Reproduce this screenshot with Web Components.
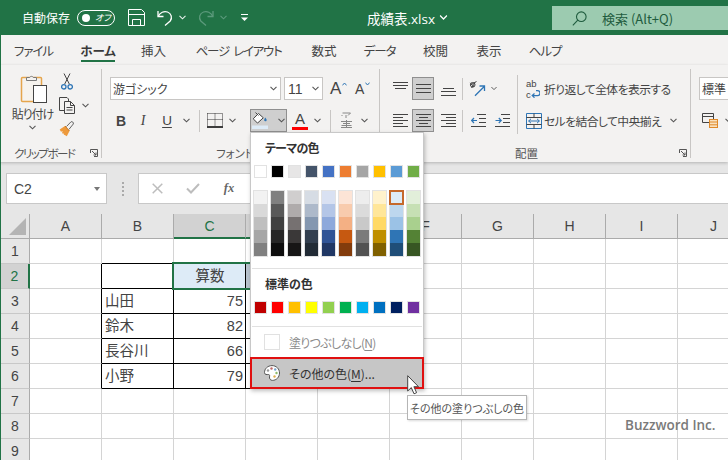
<!DOCTYPE html>
<html lang="ja">
<head>
<meta charset="utf-8">
<title>成績表.xlsx</title>
<style>
html,body{margin:0;padding:0;background:#fff;overflow:hidden}
</style>
</head>
<body>
<xl-app>
  <xl-titlebar></xl-titlebar>
  <xl-tabs></xl-tabs>
  <xl-ribbon></xl-ribbon>
  <xl-formula></xl-formula>
  <xl-sheet></xl-sheet>
  <xl-mark slot="overlay">Buzzword Inc.</xl-mark>
  <xl-color-menu slot="overlay"></xl-color-menu>
  <xl-tip slot="overlay">その他の塗りつぶしの色</xl-tip>
  <xl-cursor slot="overlay"></xl-cursor>
</xl-app>

<script>
const GREEN = '#217346';
const chev = (c='#555') => `<svg width="7" height="5" viewBox="0 0 7 5"><path d="M.5 .8 3.5 3.8 6.5 .8" fill="none" stroke="${c}" stroke-width="1.1"/></svg>`;
const lines = (a) => `<svg width="15" height="15" viewBox="0 0 15 15">${a.map(l=>`<path d="M${l[0]} ${l[2]}.5H${l[1]}" stroke="#444" stroke-width="1"/>`).join('')}</svg>`;

const ICON = {
  save:`<svg width="17" height="17" viewBox="0 0 17 17" fill="none" stroke="#fff" stroke-width="1"><path d="M.5.5h13l3 3v13H.5z"/><path d="M.5 5.500h16M4.500 16.500v-6h8v6"/></svg>`,
  undo:`<svg width="16" height="17" viewBox="0 0 16 17" fill="none" stroke="#fff" stroke-width="1.3"><path d="M1 2v5.500h5.500"/><path d="M1.300 7.200C3 3.500 7 1.700 10.500 3c4 1.500 5 6 2.700 9L8 16.500"/></svg>`,
  redo:`<svg width="16" height="17" viewBox="0 0 16 17" fill="none" stroke="#5c9a7c" stroke-width="1.3"><path d="M15 2v5.500H9.500"/><path d="M14.700 7.200C13 3.500 9 1.700 5.500 3c-4 1.500-5 6-2.700 9L8 16.500"/></svg>`,
  qat:`<svg width="7" height="8" viewBox="0 0 7 8"><path d="M0 .5h7" stroke="#fff"/><path d="M0 3.500h7L3.500 7z" fill="#fff"/></svg>`,
  search:`<svg width="15" height="15" viewBox="0 0 15 15" fill="none" stroke="#1f5c3e" stroke-width="1.100"><circle cx="9.300" cy="5.700" r="4.800"/><path d="M5.800 9.200.8 14.300"/></svg>`,
  paste:`<svg width="30" height="32" viewBox="0 0 30 32"><rect x="2.500" y="5.500" width="20" height="24" rx="1" fill="#f6f3ee" stroke="#e5a54c" stroke-width="1.500"/><path d="M7.500 8.500v-3h3.200a2 2 0 0 1 3.600 0h3.200v3z" fill="#f3f2f1" stroke="#7a7a7a"/><rect x="14.500" y="13.500" width="13" height="17" fill="#fff" stroke="#444"/></svg>`,
  cut:`<svg width="12" height="17" viewBox="0 0 12 17" fill="none"><path d="M3 .5 8.300 11M9 .5 3.700 11" stroke="#444"/><circle cx="2.800" cy="13.800" r="2.200" stroke="#2e75b5" stroke-width="1.300"/><circle cx="9.200" cy="13.800" r="2.200" stroke="#2e75b5" stroke-width="1.300"/></svg>`,
  copy:`<svg width="17" height="17" viewBox="0 0 17 17" fill="none" stroke="#444"><path d="M5 13.500H.5V.5h7.500l1.500 1.500V4"/><path d="M5.500 4.500h6l4 4v8h-10z" fill="#f3f2f1"/><path d="M11.500 4.500v4h4M7.500 10.500h6M7.500 13h6"/></svg>`,
  brush:`<svg width="16" height="16" viewBox="0 0 16 16"><path d="M.7 8.500 6 5l4.500 5-2.700 5.300-2-1.300-1-.300.300-1.500-1.200.700-.8-1.500.600-1.400L2 10.800z" fill="#ed9a3c"/><path d="M6 5l4.500 5" stroke="#c8741e"/><path d="M7.500 5.500 12 .8c1-.8 3 .8 2.300 2.200L10 8.300" fill="#f3f2f1" stroke="#666"/></svg>`,
  launcher:`<svg width="8" height="8" viewBox="0 0 8 8" fill="none" stroke="#555"><path d="M.5 4V.5H7.500V7.500H4"/><path d="M2 2 6 6M6 3.500V6H3.500"/></svg>`,
  border:`<svg width="16" height="15" viewBox="0 0 16 15" fill="none"><path d="M.5 .5H15.500V13M.5 .5V13M8 .5V13M.5 6.500H15.500" stroke="#333" stroke-dasharray="1 1"/><path d="M0 14h16" stroke="#000" stroke-width="1.500"/></svg>`,
  bucket:`<svg width="16" height="17" viewBox="0 0 16 17"><path d="M6.500 1.500 1.200 6.800l4.300 4.300 5.800-5.300z" fill="#fff" stroke="#444" stroke-width="1"/><path d="M3.500 .5 6.500 3.500" stroke="#444"/><path d="M13.300 5.500c1 1.500 1.700 2.300 1.200 3.200s-2 .7-2.300-.2c-.2-.7.500-2 1.100-3z" fill="#2e75b5"/><path d="M0 13.500h16V17H0z" fill="#ddebf7"/></svg>`,
  phon:`<svg width="13" height="17" viewBox="0 0 13 17" fill="none" stroke="#888"><path d="M2.500 1h8L8 3.500M6 3v3M2 4v-1"/><path d="M1 9.500h11M3 11.500h7M1.500 13.500h10M1 15.500h11M6.500 8v8"/></svg>`,
  orient:`<svg width="17" height="17" viewBox="0 0 17 17" fill="none"><path d="M1 5.200 7.500 1.500M2.500 8 6 2.800M1.300 2.800l3.800 4.200" stroke="#444"/><circle cx="3.700" cy="4.800" r="2.300" stroke="#444"/><path d="M6 15.800 15 6.800M10.500 6h5v5" stroke="#2e75b5" stroke-width="1.300"/></svg>`,
  indentL:`<svg width="15" height="13" viewBox="0 0 15 13" fill="none"><path d="M6 .5h9M8 4.500h7M8 8.500h7M0 12.500h15" stroke="#444"/><path d="M6 6.500H.8M3 4 .7 6.500 3 9" stroke="#2e75b5" stroke-width="1.200"/></svg>`,
  indentR:`<svg width="15" height="13" viewBox="0 0 15 13" fill="none"><path d="M6 .5h9M8 4.500h7M8 8.500h7M0 12.500h15" stroke="#444"/><path d="M.5 6.500h5.500M3.800 4 6.200 6.500 3.800 9" stroke="#2e75b5" stroke-width="1.200"/></svg>`,
  merge:`<svg width="16" height="16" viewBox="0 0 16 16" fill="none"><path d="M.5 .5h15v15H.5z" stroke="#2e75b5"/><path d="M.5 4.500h15M.5 11.500h15M8 .5v4M8 11.500v4" stroke="#444"/><path d="M2.500 8h11M5 5.800 2.700 8 5 10.200M11 5.800 13.300 8 11 10.200" stroke="#2e75b5"/></svg>`,
  style:`<svg width="16" height="15" viewBox="0 0 16 15" fill="none"><path d="M.5 .5h11v9H.5z" stroke="#444"/><path d="M.5 3.500h11" stroke="#444"/><rect x="7.500" y="6.500" width="8" height="8" fill="#f9e2c0" stroke="#e08a2a"/><path d="M7.500 9h8M7.500 11.800h8" stroke="#e08a2a"/></svg>`,
  x:`<svg width="11" height="11" viewBox="0 0 11 11"><path d="M.7.7 10.300 10.300M10.300.7.700 10.300" stroke="#bdbdbd" stroke-width="1.500"/></svg>`,
  check:`<svg width="14" height="11" viewBox="0 0 14 11"><path d="M1 5.500 5 9.500 13 1" fill="none" stroke="#bdbdbd" stroke-width="2"/></svg>`,
  palette:`<svg width="16" height="16" viewBox="0 0 16 16"><path d="M8 .6C3.600.6.500 3.800.500 7.500c0 2.500 2.500 2 4 2 1.200 0 1.300 1.200 1 2.400-.3 1.500.7 3.500 2.800 3.500 4.200 0 7.200-3.300 7.200-7.400S12.400.6 8 .6z" fill="#fff" stroke="#555"/><circle cx="4" cy="5.500" r="1.200" fill="#9a9a9a"/><circle cx="7.500" cy="3.500" r="1.200" fill="#c06a6a"/><circle cx="11.200" cy="4.500" r="1.200" fill="#7aa7d0"/><circle cx="12.500" cy="8" r="1.200" fill="#8dbb6c"/><circle cx="10.500" cy="11.500" r="1.200" fill="#e0b050"/></svg>`,
  caretUp:`<svg width="5" height="4" viewBox="0 0 5 4"><path d="M.4 3.400 2.500 1 4.600 3.400" fill="none" stroke="#2e75b5"/></svg>`,
  caretDown:`<svg width="5" height="4" viewBox="0 0 5 4"><path d="M.4 .6 2.500 3 4.600 .6" fill="none" stroke="#2e75b5"/></svg>`,
  wrapArrow:`<svg width="9" height="8" viewBox="0 0 9 8" fill="none" stroke="#2e75b5" stroke-width="1.200"><path d="M5 .6h1.500a2.500 2.500 0 0 1 0 5H1.500M3.500 3.500 1.200 5.600 3.500 7.700"/></svg>`
};
const ALIGN = {
  top: lines([[0,15,1],[0,15,4],[2,13,7]]),
  mid: lines([[0,15,3],[0,15,7],[0,15,11]]),
  bot: lines([[2,13,7],[0,15,10],[0,15,14]]),
  left: lines([[0,15,1],[0,10,4],[0,15,7],[0,10,10],[0,15,13]]),
  center: lines([[0,15,1],[3,12,4],[0,15,7],[3,12,10],[0,15,13]]),
  right: lines([[0,15,1],[5,15,4],[0,15,7],[5,15,10],[0,15,13]])
};

class XlApp extends HTMLElement{
  constructor(){
    super();
    this.attachShadow({mode:'open'}).innerHTML = `
    <style>
      :host{display:block;position:relative;width:728px;height:460px;overflow:hidden;
        font-family:"Noto Sans CJK JP","Noto Sans",sans-serif;font-feature-settings:"palt";color:#444;background:#fff}
      .main{display:flex;flex-direction:column;height:460px;box-sizing:border-box}
    </style>
    <div class="main"><slot></slot></div>
    <slot name="overlay"></slot>`;
  }
}

class XlTitlebar extends HTMLElement{
  constructor(){
    super();
    this.attachShadow({mode:'open'}).innerHTML = `
    <style>
      :host{display:flex;align-items:center;height:35px;background:${GREEN};color:#fff;font-size:12px;flex:none}
      .auto{margin-left:22px;width:48px;white-space:nowrap}
      .toggle{margin-left:7px;width:38px;height:16px;box-sizing:border-box;border:1.2px solid #fff;border-radius:8px;display:flex;align-items:center;padding-left:4px}
      .dot{width:8px;height:8px;border-radius:50%;background:#fff}
      .off{font-size:9px;margin-left:5px;line-height:12px;font-style:italic}
      .i{display:flex}
      .file{margin-left:119px;width:70px;font-size:13.500px;white-space:nowrap;font-family:"Open Sans","Noto Sans CJK JP",sans-serif}
      .search{margin-left:auto;width:176px;height:24px;margin-top:1px;background:#9ccbb0;color:#1f5c3e;display:flex;align-items:center;font-size:13px;white-space:nowrap}
    </style>
    <span class="auto">自動保存</span>
    <span class="toggle"><span class="dot"></span><span class="off">オフ</span></span>
    <span class="i" style="margin-left:13px">${ICON.save}</span>
    <span class="i" style="margin-left:12px">${ICON.undo}</span>
    <span class="i" style="margin-left:6px">${chev('#e8f1ec')}</span>
    <span class="i" style="margin-left:12px">${ICON.redo}</span>
    <span class="i" style="margin-left:6px">${chev('#5c9a7c')}</span>
    <span class="i" style="margin-left:14px">${ICON.qat}</span>
    <span class="file">成績表.xlsx</span>
    <span class="i" style="margin-left:3px;transform:scale(1.150)">${chev('#fff')}</span>
    <span class="search"><span class="i" style="margin-left:20px">${ICON.search}</span><span style="margin-left:15px">検索 (Alt+Q)</span></span>`;
  }
}

class XlTabs extends HTMLElement{
  constructor(){
    super();
    const tabs = [['ファイル',15,37,1],['ホーム',81,34],['挿入',141,25],['ページ レイアウト',196,85,2],['数式',311,26],['データ',364,31,1],['校閲',423,25],['表示',476,26],['ヘルプ',529,32,1]];
    let x = 1;
    let html = '';
    for(const [t,l,w,kana] of tabs){
      html += `<span class="tab${t=='ホーム'?' on':''}${kana==1?' kana':''}${kana==2?' kana2':''}" style="margin-left:${l-x}px;width:${w}px">${t}</span>`;
      x = l+w;
    }
    this.attachShadow({mode:'open'}).innerHTML = `
    <style>
      :host{display:flex;height:30px;background:#f3f2f1;border-left:1px solid ${GREEN};flex:none;font-size:12.500px;color:#444}
      .tab{display:flex;justify-content:center;box-sizing:border-box;height:27px;padding-top:7px;line-height:18px;white-space:pre}
      .kana{letter-spacing:-1px}
      .kana2{letter-spacing:-1.300px;word-spacing:3px}
      .on{font-weight:700;color:#3a3a3a;border-bottom:2px solid ${GREEN}}
    </style>${html}`;
  }
}

class XlGroup extends HTMLElement{
  constructor(){
    super();
    const w = this.getAttribute('w'), lx = this.getAttribute('lx');
    this.attachShadow({mode:'open'}).innerHTML = `
    <style>
      :host{display:block;flex:none;width:${w}px;height:89px;box-sizing:border-box;border-right:1px solid #c8c6c4}
      .body{height:76px}
      .foot{display:flex;align-items:center;height:16px;font-size:11.500px;color:#555;line-height:16px}
      .label{margin-left:${lx}px;white-space:nowrap;letter-spacing:${this.getAttribute('ls')||0}px}
      .launch{margin-left:auto;margin-right:${this.getAttribute('lr')||3}px;display:flex}
    </style>
    <div class="body"><slot></slot></div>
    <div class="foot"><span class="label">${this.getAttribute('label')||''}</span>
    ${this.hasAttribute('launch')?`<span class="launch">${ICON.launcher}</span>`:''}</div>`;
  }
}

class XlRibbon extends HTMLElement{
  constructor(){
    super();
    const c = (w,inner='',cls='') => `<span class="c ${cls}" style="width:${w}px">${inner}</span>`;
    const sep = `<span class="sep"></span>`;
    this.attachShadow({mode:'open'}).innerHTML = `
    <style>
      :host{display:flex;flex:none;height:97px;box-sizing:border-box;padding-top:4px;background:#f3f2f1;border-left:1px solid ${GREEN};
        box-shadow:0 1px 3px rgba(0,0,0,.22);position:relative;z-index:1;font-size:12px}
      .rows{display:flex;flex-direction:column;gap:9px;padding-top:8px}
      .row{display:flex;height:23px;align-items:center}
      .c{display:flex;align-items:center;justify-content:center;height:23px;flex:none}
      .sep{flex:none;width:1px;height:22px;background:#c8c6c4}
      .on{background:#cfcfcf;box-shadow:inset 0 0 0 1px #8f8f8f}
      .box{box-sizing:border-box;height:23px;background:#fff;border:1px solid #c8c6c4;display:flex;align-items:center;justify-content:space-between;flex:none;white-space:nowrap}
      .clip{display:flex;height:76px}
      .paste{width:57px;display:flex;flex-direction:column;align-items:center;padding:3px 0 0 6px;box-sizing:border-box}
      .paste svg{display:block}
      .paste .ic{margin-left:3px}
      .paste .t{line-height:16px;margin-top:2px;white-space:nowrap;font-size:12px;letter-spacing:-1px}
      .paste .d{margin-top:3px;display:flex}
      .tools{display:flex;flex-direction:column;padding-top:0}
      .tools .row{height:24px}
      .b{font:700 14px "Liberation Sans",sans-serif;color:#444}
      .i{font:italic 14px "Liberation Serif",serif;color:#444}
      .u{font:13.500px "Liberation Sans",sans-serif;color:#444;text-decoration:underline;text-underline-offset:2px}
      .aa{font:17px "Liberation Sans",sans-serif;color:#444;width:12px}
      .a2{font:14px "Liberation Sans",sans-serif;color:#444;width:10px}
      .fc{flex-direction:column;font:15px/14px "Liberation Sans",sans-serif;color:#444}
      .fc i{display:block;width:16px;height:3px;background:#f00;margin-top:1px}
      .wrapi{display:flex;flex-direction:column;font:9.500px/11px "Liberation Sans",sans-serif;color:#444;white-space:nowrap;width:15px}
      .wrapi span{display:flex;align-items:center}
      .split{display:flex;height:76px}
      .left{width:137px;box-sizing:border-box;padding-left:9px;flex:none}
      .vline{flex:none;width:1px;height:59px;margin-top:6px;background:#c8c6c4}
      .txt{margin-left:1px;white-space:nowrap;font-size:11.800px;letter-spacing:-.55px}
      .cr{display:flex;align-self:flex-start;margin-top:5px}
    </style>

    <xl-group w="101" lx="13" ls="-1.500" label="クリップボード" launch>
      <div class="clip">
        <div class="paste"><span class="ic">${ICON.paste}</span><span class="t">貼り付け</span><span class="d">${chev()}</span></div>
        <div class="tools">
          <div class="row">${c(18,ICON.cut)}</div>
          <div class="row">${c(18,ICON.copy)}${c(6)}${c(7,chev())}</div>
          <div class="row">${c(18,ICON.brush)}</div>
        </div>
      </div>
    </xl-group>

    <xl-group w="278" lx="114" label="フォント">
      <div class="rows" style="padding-left:8px">
        <div class="row">
          <span class="box" style="width:171px;padding:0 3px 0 2px"><span>游ゴシック</span>${chev()}</span>
          <span class="box" style="width:39px;margin-left:3px;padding:0 3px;font:14px 'Liberation Sans',sans-serif"><span>11</span>${chev()}</span>
          ${c(7)}<span class="aa">A</span><span class="cr">${ICON.caretUp}</span><span style="width:8px"></span><span class="a2">A</span><span class="cr">${ICON.caretDown}</span>
        </div>
        <div class="row">
          ${c(22,'B','b')}${c(22,'I','i')}${c(26,'U','u')}${c(12,chev())}${c(7)}${sep}
          ${c(29,ICON.border)}${c(7,chev())}${c(14)}
          ${c(37,`<span style="display:flex;margin-right:10px">${ICON.bucket}</span>${chev()}`,'on')}
          ${c(26,'<span>A</span><i></i>','fc')}${c(8,chev())}${c(9)}${sep}
          ${c(30,ICON.phon)}${c(7,chev())}
        </div>
      </div>
    </xl-group>

    <xl-group w="311" lx="135" label="配置" launch>
      <div class="split">
        <div class="left rows">
          <div class="row">${c(23,ALIGN.top)}${c(22,ALIGN.mid,'on')}${c(28,ALIGN.bot)}${sep}${c(28,ICON.orient)}${c(6,chev())}</div>
          <div class="row">${c(23,ALIGN.left)}${c(22,ALIGN.center,'on')}${c(28,ALIGN.right)}${sep}${c(30,ICON.indentL)}${c(18,ICON.indentR)}</div>
        </div>
        <span class="vline"></span>
        <div class="rows">
          <div class="row">${c(6)}${c(19,`<span class="wrapi"><span>ab</span><span>c${ICON.wrapArrow}</span></span>`)}<span class="txt">折り返して全体を表示する</span></div>
          <div class="row">${c(6)}${c(19,ICON.merge)}<span class="txt">セルを結合して中央揃え</span>${c(9)}${chev()}</div>
        </div>
      </div>
    </xl-group>

    <div class="rows" style="padding-left:8px">
      <div class="row"><span class="box" style="width:60px;padding-left:2px;justify-content:flex-start">標準</span></div>
      <div class="row">${c(3)}${ICON.style}${c(7)}${chev()}</div>
    </div>`;
  }
}

class XlFormula extends HTMLElement{
  constructor(){
    super();
    this.attachShadow({mode:'open'}).innerHTML = `
    <style>
      :host{display:flex;flex:none;height:52px;box-sizing:border-box;padding:11px 0 0 5px;background:#e6e6e6;border-left:1px solid ${GREEN}}
      .name{box-sizing:border-box;width:101px;height:31px;background:#fff;border:1px solid #c8c8c8;display:flex;align-items:center;justify-content:space-between;
        padding:0 6px 0 7px;font:14px "Liberation Sans",sans-serif;color:#444;flex:none}
      .arrow{width:0;height:0;border:3.500px solid transparent;border-top:4px solid #777;border-bottom:0}
      .dots{width:31px;flex:none;display:flex;flex-direction:column;align-items:center;justify-content:center;gap:2px;height:31px}
      .dots i{width:2px;height:2px;background:#aaa;display:block}
      .box{flex:none;width:600px;height:31px;box-sizing:border-box;background:#fff;border:1px solid #c8c8c8;display:flex;align-items:center}
      .c{width:36px;display:flex;justify-content:center;align-items:center;flex:none}
      .fx{font:italic 700 12.500px "Liberation Serif",serif;color:#666}
    </style>
    <div class="name"><span>C2</span><span class="arrow"></span></div>
    <div class="dots"><i></i><i></i><i></i><i></i></div>
    <div class="box"><span class="c">${ICON.x}</span><span class="c">${ICON.check}</span><span class="c fx">fx</span></div>`;
  }
}

class XlSheet extends HTMLElement{
  constructor(){
    super();
    const cols = ['A','B','C','','','F','G','H','I','J'];
    const data = {2:{2:'算数'},3:{1:'山田',2:'75'},4:{1:'鈴木',2:'82'},5:{1:'長谷川',2:'66'},6:{1:'小野',2:'79'}};
    const at = (r,c) => `style="grid-row:${r+1};grid-column:${c+2}"`;
    let h = `<div class="corner" ${at(0,-1)}><span class="tri"></span></div>`;
    cols.forEach((t,i)=>{ h += `<div class="ch${i>=2&&i<=4?' sel':''}" ${at(0,i)}>${t}</div>`; });
    for(let r=1;r<=9;r++){
      h += `<div class="rh${r==2?' sel':''}" ${at(r,-1)}>${r}</div>`;
      cols.forEach((_,c)=>{
        let cls = 'cell';
        if(r>=2&&r<=6&&c<=4) cls += ' br';
        if(r<=6&&c>=1&&c<=4) cls += ' bb';
        if(r==2&&(c==3||c==4)) cls += ' range';
        const v = (data[r]&&data[r][c])||'';
        if(c==2&&r>2) cls += ' num';
        if(c==2&&r==2) cls += ' mid';
        h += `<div class="${cls}" ${at(r,c)}>${v}</div>`;
      });
    }
    this.attachShadow({mode:'open'}).innerHTML = `
    <style>
      :host{display:block;flex:1;min-height:0;overflow:hidden;border-left:1px solid ${GREEN};background:#fff}
      .grid{display:grid;grid-template-columns:29px repeat(10,72px);grid-template-rows:25px repeat(9,25px);width:749px}
      .corner,.ch,.rh{box-sizing:border-box;background:#e6e6e6;color:#444;display:flex;align-items:center;justify-content:center;font:14px "Liberation Sans",sans-serif}
      .corner{border-bottom:1px solid #ababab;border-right:1px solid #ababab;justify-content:flex-end;align-items:flex-end;padding:0 3px 3px 0}
      .tri{width:0;height:0;border-left:17px solid transparent;border-bottom:17px solid #b4b4b4}
      .ch{border-right:1px solid #ababab;border-bottom:1px solid #ababab}
      .ch.sel{background:#d2d2d2;color:${GREEN};border-bottom:2px solid ${GREEN}}
      .rh{border-right:1px solid #ababab;border-bottom:1px solid #c8c8c8}
      .rh.sel{background:#d2d2d2;color:${GREEN};border-right:2px solid ${GREEN}}
      .cell{box-sizing:border-box;border-right:1px solid #d4d4d4;border-bottom:1px solid #d4d4d4;font-size:14.500px;line-height:22px;padding:0 2px 0 3px;color:#444;white-space:nowrap;font-feature-settings:normal}
      .br{border-right-color:#000}
      .bb{border-bottom-color:#000}
      .num{text-align:right;font-family:"Liberation Sans",sans-serif;line-height:24px}
      .mid{text-align:center;background:#ddebf7}
      .range{background:#b8c3ce}
      .selbox{grid-row:3;grid-column:4 / span 3;margin:-2px -1px -1px -2px;border:2px solid ${GREEN};pointer-events:none;z-index:1}
    </style>
    <div class="grid">${h}<div class="selbox"></div></div>`;
  }
}

class XlColorMenu extends HTMLElement{
  constructor(){
    super();
    const theme = ['ffffff','000000','e7e6e6','44546a','4472c4','ed7d31','a5a5a5','ffc000','5b9bd5','70ad47'];
    const shades = [
      ['f2f2f2','d9d9d9','bfbfbf','a6a6a6','808080'],
      ['808080','595959','404040','262626','0d0d0d'],
      ['d0cece','afabab','767171','3a3838','171616'],
      ['d6dce4','adb9ca','8497b0','333f4f','222b35'],
      ['d9e1f2','b4c6e7','8ea9db','305496','203764'],
      ['fce4d6','f8cbad','f4b084','c65911','833c0c'],
      ['ededed','dbdbdb','c9c9c9','7b7b7b','525252'],
      ['fff2cc','ffe699','ffd966','bf8f00','806000'],
      ['ddebf7','bdd7ee','9bc2e6','2f75b5','1f4e78'],
      ['e2efda','c6e0b4','a9d08e','548235','375623']];
    const std = ['c00000','ff0000','ffc000','ffff00','92d050','00b050','00b0f0','0070c0','002060','7030a0'];
    const sw = a => a.map(x=>`<i class="s" style="background:#${x}"></i>`).join('');
    const shade = shades.map((col,ci)=>`<span class="col">${col.map((x,ri)=>`<i class="t${ci==8&&ri==0?' picked':''}" style="background:#${x}"></i>`).join('')}</span>`).join('');
    this.attachShadow({mode:'open'}).innerHTML = `
    <style>
      :host{position:absolute;left:250px;top:132px;width:174px;height:257px;box-sizing:border-box;background:#fff;border:1px solid #c8c8c8;
        box-shadow:1px 2px 4px rgba(0,0,0,.25);z-index:3;font-size:12px;color:#444;display:flex;flex-direction:column}
      h4{margin:6px 0 0 14px;font-size:12px;font-weight:700;line-height:18px;color:#333}
      h4.k{letter-spacing:-.8px}
      .g{display:grid;grid-template-columns:repeat(10,13px);column-gap:4px;margin:8px 0 0 3px}
      .s{display:block;box-sizing:border-box;height:13px;width:13px;border:1px solid #e2e2e2}
      .col{display:flex;flex-direction:column;outline:1px solid #e2e2e2}
      .t{display:block;height:13px;box-sizing:border-box}
      .picked{border:1px solid #fff;outline:2px solid #c5692c;outline-offset:-1px;position:relative;z-index:1}
      hr{border:0;height:1px;background:#e1e1e1;margin:12px 1px 0}
      .row{display:flex;align-items:center;white-space:nowrap;flex:none}
      .none{height:30px;padding-left:13px;color:#8a8a8a}
      .none .tx{letter-spacing:-.7px}
      .chk{width:16px;height:16px;box-sizing:border-box;border:1px solid #e1e1e1;margin-right:9px}
      .more{height:32px;margin:0 -1px -1px;box-sizing:border-box;background:#c6c6c6;border:2px solid #e01010;padding-left:12px;color:#333}
      .more svg{margin-right:9px}
      u{text-underline-offset:2px}
    </style>
    <h4 class="k">テーマの色</h4>
    <div class="g">${sw(theme)}</div>
    <div class="g" style="margin-top:13px">${shade}</div>
    <hr>
    <h4>標準の色</h4>
    <div class="g">${sw(std)}</div>
    <hr>
    <div class="row none"><span class="chk"></span><span class="tx">塗りつぶしなし(<u>N</u>)</span></div>
    <div class="row more">${ICON.palette}<span>その他の色(<u>M</u>)...</span></div>`;
  }
}

class XlTip extends HTMLElement{
  constructor(){
    super();
    this.attachShadow({mode:'open'}).innerHTML = `
    <style>
      :host{position:absolute;left:407px;top:395px;width:120px;height:25px;box-sizing:border-box;background:#fff;border:1px solid #b5b5b5;
        box-shadow:1px 1px 2px rgba(0,0,0,.15);z-index:4;font-size:11px;color:#555;display:flex;align-items:center;justify-content:center;white-space:nowrap}
    </style><slot></slot>`;
  }
}

class XlCursor extends HTMLElement{
  constructor(){
    super();
    this.attachShadow({mode:'open'}).innerHTML = `
    <style>:host{position:absolute;left:407px;top:375px;z-index:5;display:block;width:13px;height:21px}</style>
    <svg width="13" height="21" viewBox="0 0 13 21"><path d="M.7.700V16l3.600-3.400L7 18.800l2.600-1.100-2.700-6H11.500z" fill="#fff" stroke="#444" stroke-width="1"/></svg>`;
  }
}

class XlMark extends HTMLElement{
  constructor(){
    super();
    this.attachShadow({mode:'open'}).innerHTML = `
    <style>:host{position:absolute;left:625px;top:415px;z-index:2;font:600 13.500px/20px "Open Sans",sans-serif;color:#7a7a7a;white-space:nowrap}</style><slot></slot>`;
  }
}

customElements.define('xl-app',XlApp);
customElements.define('xl-titlebar',XlTitlebar);
customElements.define('xl-tabs',XlTabs);
customElements.define('xl-group',XlGroup);
customElements.define('xl-ribbon',XlRibbon);
customElements.define('xl-formula',XlFormula);
customElements.define('xl-sheet',XlSheet);
customElements.define('xl-color-menu',XlColorMenu);
customElements.define('xl-tip',XlTip);
customElements.define('xl-cursor',XlCursor);
customElements.define('xl-mark',XlMark);
</script>
</body>
</html>
